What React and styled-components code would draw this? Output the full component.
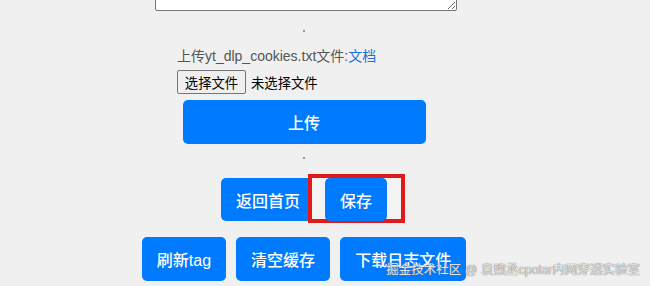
import React from "react";
import styled, { createGlobalStyle } from "styled-components";

const Global = createGlobalStyle`
  html, body { margin: 0; padding: 0; background: #f0f0f0; overflow: hidden; }
  body { font-family: "Liberation Sans", "Noto Sans CJK SC", sans-serif; }
`;

const Page = styled.div`
  position: relative;
  width: 650px;
  height: 286px;
  box-sizing: border-box;
  padding-right: 42px;
  display: flex;
  flex-direction: column;
  align-items: center;
  overflow: hidden;
`;

const TextArea = styled.textarea`
  box-sizing: border-box;
  width: 302px;
  height: 60px;
  margin: -49px 0 0 4px;
  background: #fff;
  border: 1px solid #767676;
  border-radius: 2px;
  flex-shrink: 0;
`;

const Dot = styled.div`
  width: 2px;
  height: 2px;
  background: #9a9a9a;
  margin-top: ${(p) => p.$mt}px;
  flex-shrink: 0;
`;

const Form = styled.div`
  width: 254px;
  margin-top: 14px;
  display: flex;
  flex-direction: column;
  flex-shrink: 0;
`;

const Label = styled.div`
  font-size: 14px;
  line-height: 20px;
  color: #555;
`;

const Link = styled.a`
  color: #1a6fd8;
  text-decoration: none;
`;

const FileRow = styled.div`
  margin-top: 4px;
  display: flex;
  align-items: center;
  height: 24px;
  font-size: 13.33px;
  color: #000;
`;

const FileButton = styled.span`
  box-sizing: border-box;
  height: 24px;
  width: 69px;
  display: flex;
  align-items: center;
  justify-content: center;
  background: #efefef;
  border: 1px solid #767676;
  border-radius: 2px;
  margin-right: 5px;
`;

const Button = styled.button`
  box-sizing: border-box;
  height: ${(p) => p.$h || 44}px;
  padding: 0 15px;
  border: none;
  border-radius: 5px;
  background: #007bff;
  color: #fff;
  font-family: "Liberation Sans", "Noto Sans CJK SC", sans-serif;
  font-size: 16px;
  font-weight: 500;
  cursor: pointer;
  position: relative;
  white-space: nowrap;
`;

const WideButton = styled(Button)`
  width: 243px;
  margin: 6px auto 0;
  align-self: center;
`;

const Row = styled.div`
  display: flex;
  gap: 10px;
  margin-top: ${(p) => p.$mt}px;
  flex-shrink: 0;
`;

const Highlight = styled.div`
  position: relative;
  display: flex;
`;

const RedBox = styled.div`
  position: absolute;
  left: -17px;
  top: -4px;
  width: 97px;
  height: 49px;
  box-sizing: border-box;
  border: 4px solid #e0191b;
  background: #f3f3f3;
  z-index: 1;
`;

const TopButton = styled(Button)`
  z-index: 2;
`;

const Watermark = styled.div`
  position: absolute;
  right: 10px;
  bottom: 8px;
  font-size: 12.5px;
  line-height: 16px;
  color: rgba(255, 255, 255, 0.8);
  text-shadow: 0 0 1px #777, 0 0 1px #777;
  white-space: nowrap;
  z-index: 5;
`;

export default function App() {
  return (
    <>
      <Global />
      <Page>
        <TextArea />
        <Dot $mt={19} />
        <Form>
          <Label>
            上传yt_dlp_cookies.txt文件:<Link href="#">文档</Link>
          </Label>
          <FileRow>
            <FileButton>选择文件</FileButton>
            <span>未选择文件</span>
          </FileRow>
          <WideButton>上传</WideButton>
        </Form>
        <Dot $mt={13} />
        <Row $mt={19}>
          <Button $h={43}>返回首页</Button>
          <Highlight>
            <RedBox />
            <TopButton $h={43}>保存</TopButton>
          </Highlight>
        </Row>
        <Row $mt={16}>
          <Button>刷新tag</Button>
          <Button>清空缓存</Button>
          <Button>下载日志文件</Button>
        </Row>
        <Watermark>掘金技术社区 @ 袁煦丞cpolar内网穿透实验室</Watermark>
      </Page>
    </>
  );
}
